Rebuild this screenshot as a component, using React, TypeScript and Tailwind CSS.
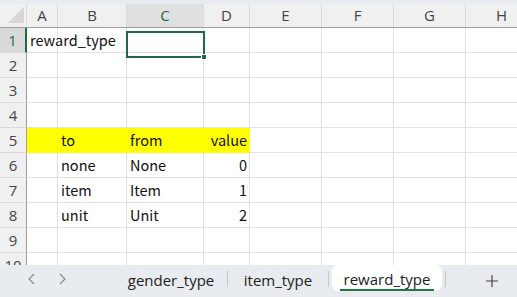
import React from 'react';

const cols = [
  { name: 'A', w: 31 },
  { name: 'B', w: 69 },
  { name: 'C', w: 77 },
  { name: 'D', w: 46 },
  { name: 'E', w: 72 },
  { name: 'F', w: 72 },
  { name: 'G', w: 72 },
  { name: 'H', w: 72 },
];

type Cell = { text: string; right?: boolean };

const data: Record<number, Record<string, Cell>> = {
  1: { A: { text: 'reward_type' } },
  5: { B: { text: 'to' }, C: { text: 'from' }, D: { text: 'value', right: true } },
  6: { B: { text: 'none' }, C: { text: 'None' }, D: { text: '0', right: true } },
  7: { B: { text: 'item' }, C: { text: 'Item' }, D: { text: '1', right: true } },
  8: { B: { text: 'unit' }, C: { text: 'Unit' }, D: { text: '2', right: true } },
};

const cellFont = { fontFamily: '"Noto Sans CJK JP", "Noto Sans", sans-serif' };
const uiFont = { fontFamily: '"Open Sans", "Noto Sans", sans-serif' };

function Row({ n }: { n: number }) {
  const row = data[n] || {};
  const yellow = n === 5;
  return (
    <div className="flex h-[25px] shrink-0">
      <div
        className={`w-[27px] shrink-0 flex items-center justify-center text-[15px] border-b border-[#dadada] ${
          n === 1
            ? 'bg-[#d9d9d9] text-[#1e6b41] border-r-2 border-r-[#1e6b41]'
            : 'bg-[#f0f0f0] text-[#444] border-r border-r-[#9e9e9e]'
        }`}
        style={uiFont}
      >
        {n}
      </div>
      {cols.map(c => {
        const cell = row[c.name];
        const fill = yellow && ['A', 'B', 'C', 'D'].includes(c.name);
        return (
          <div
            key={c.name}
            style={{ width: c.w, ...cellFont }}
            className={`shrink-0 flex items-center text-[14.5px] text-[#111] whitespace-nowrap overflow-visible border-b border-r ${
              fill ? 'bg-[#ffff00] border-[#ffff00]' : 'border-[#e1e1e1]'
            } ${cell?.right ? 'justify-end pr-[2px]' : 'pl-[3px]'}`}
          >
            {cell?.text}
          </div>
        );
      })}
    </div>
  );
}

export default function App() {
  return (
    <div className="w-[517px] h-[297px] overflow-hidden flex flex-col bg-white">
      <div className="h-[4px] shrink-0 bg-[#e8ecf0]" />

      <div className="relative flex-1 overflow-hidden">
        {/* column headers */}
        <div className="flex h-[24px] shrink-0 bg-[#f0f0f0] border-b border-[#9e9e9e]">
          <div className="w-[27px] shrink-0 relative border-r border-[#dadada]">
            <svg className="absolute left-[8px] top-[3px]" width="16" height="16" viewBox="0 0 16 16">
              <polygon points="16,0 16,16 0,16" fill="#d6d6d6" />
            </svg>
          </div>
          {cols.map(c => (
            <div
              key={c.name}
              style={{ width: c.w, ...uiFont }}
              className={`shrink-0 flex items-center justify-center text-[15px] border-r border-[#dadada] ${
                c.name === 'C' ? 'bg-[#e0e0e0] text-[#1e6b41]' : 'text-[#444]'
              }`}
            >
              {c.name}
            </div>
          ))}
        </div>

        {[1, 2, 3, 4, 5, 6, 7, 8, 9, 10].map(n => (
          <Row key={n} n={n} />
        ))}

        {/* active cell C1 */}
        <div className="absolute left-[126px] top-[27px] w-[79px] h-[27px] border-2 border-[#1e6b41]" />
        <div className="absolute left-[201px] top-[50px] w-[6px] h-[6px] bg-[#1e6b41] border border-white" />
      </div>

      {/* sheet tabs */}
      <div className="h-[32px] shrink-0 bg-[#e8ebef] flex items-start text-[15px] text-[#222]" style={uiFont}>
        <div className="w-[115px] h-[27px] flex items-center text-[#8a8a8a]">
          <span className="ml-[25px] w-[12px] flex justify-center">
            <svg width="8" height="12" viewBox="0 0 8 12">
              <polyline points="7,1 2,6 7,11" fill="none" stroke="#8a8a8a" strokeWidth="1.2" />
            </svg>
          </span>
          <span className="ml-[20px] w-[12px] flex justify-center">
            <svg width="8" height="12" viewBox="0 0 8 12">
              <polyline points="1,1 6,6 1,11" fill="none" stroke="#8a8a8a" strokeWidth="1.2" />
            </svg>
          </span>
        </div>
        <div className="w-[112px] h-[27px] flex items-center justify-center pt-[4px]">gender_type</div>
        <div className="w-px h-[16px] mt-[6px] bg-[#c4c4c4]" />
        <div className="w-[100px] h-[27px] flex items-center justify-center pt-[4px]">item_type</div>
        <div className="w-px h-[16px] mt-[6px] bg-[#c4c4c4]" />
        <div className="ml-[3px] w-[110px] h-[26px] bg-white rounded-md flex flex-col items-center justify-center pt-[4px]">
          <span className="leading-[18px]">reward_type</span>
          <span className="w-[94px] h-[2px] bg-[#1e7a44] mt-[1px]" />
        </div>
        <div className="ml-[3px] w-px h-[16px] mt-[6px] bg-[#c4c4c4]" />
        <div className="flex-1 h-[27px] flex items-center justify-center pt-[4px] pl-[20px]">
          <svg width="14" height="14" viewBox="0 0 14 14">
            <path d="M7 1v12M1 7h12" stroke="#444" strokeWidth="1.2" />
          </svg>
        </div>
      </div>
    </div>
  );
}
